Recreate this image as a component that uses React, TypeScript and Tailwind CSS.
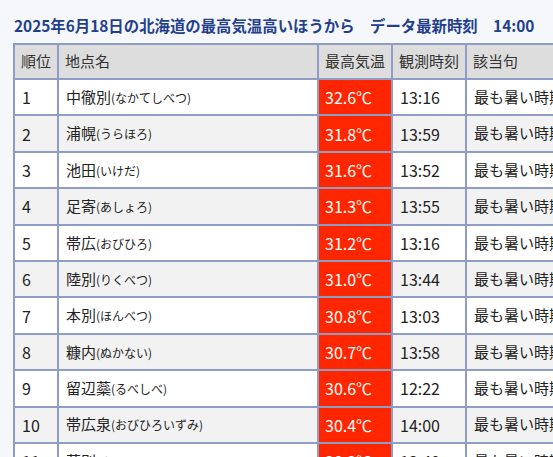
import React from 'react';

type Row = { rank: number; name: string; kana: string; temp: string; time: string };

const rows: Row[] = [
  { rank: 1, name: '中徹別', kana: 'なかてしべつ', temp: '32.6', time: '13:16' },
  { rank: 2, name: '浦幌', kana: 'うらほろ', temp: '31.8', time: '13:59' },
  { rank: 3, name: '池田', kana: 'いけだ', temp: '31.6', time: '13:52' },
  { rank: 4, name: '足寄', kana: 'あしょろ', temp: '31.3', time: '13:55' },
  { rank: 5, name: '帯広', kana: 'おびひろ', temp: '31.2', time: '13:16' },
  { rank: 6, name: '陸別', kana: 'りくべつ', temp: '31.0', time: '13:44' },
  { rank: 7, name: '本別', kana: 'ほんべつ', temp: '30.8', time: '13:03' },
  { rank: 8, name: '糠内', kana: 'ぬかない', temp: '30.7', time: '13:58' },
  { rank: 9, name: '留辺蘂', kana: 'るべしべ', temp: '30.6', time: '12:22' },
  { rank: 10, name: '帯広泉', kana: 'おびひろいずみ', temp: '30.4', time: '14:00' },
  { rank: 11, name: '幕別', kana: 'まくべつ', temp: '30.3', time: '13:40' },
];

const font = { fontFamily: '"Noto Sans CJK JP", "Noto Sans", sans-serif' };

export default function App() {
  return (
    <div className="w-[553px] h-[457px] overflow-hidden bg-[#f6f7fa]" style={font}>
      <div className="pl-[13px] pt-[15px]">
        <h1 className="text-[15.4px] leading-[20px] font-bold text-[#233f8c] whitespace-nowrap mb-[8px] pl-[1px]">
          2025年6月18日の北海道の最高気温高いほうから　データ最新時刻　14:00
        </h1>
        <table className="border-collapse table-fixed w-[700px] text-[#222]">
          <colgroup>
            <col className="w-[44px]" />
            <col className="w-[260px]" />
            <col className="w-[74px]" />
            <col className="w-[74px]" />
            <col className="w-[248px]" />
          </colgroup>
          <thead>
            <tr className="h-[35px] bg-[#dddddd] text-[15px] text-[#333]">
              {['順位', '地点名', '最高気温', '観測時刻', '該当句'].map((h) => (
                <th key={h} className="border-2 border-[#8f9cc6] font-normal text-left px-[6px] whitespace-nowrap">
                  {h}
                </th>
              ))}
            </tr>
          </thead>
          <tbody>
            {rows.map((r) => (
              <tr key={r.rank} className={r.rank % 2 === 0 ? 'h-[36.4px] bg-[#f2f2f2]' : 'h-[36.4px] bg-white'}>
                <td className="border-2 border-[#8f9cc6] px-[7px] text-[16px]">{r.rank}</td>
                <td className="border-2 border-[#8f9cc6] px-[7px] text-[15px] whitespace-nowrap">
                  {r.name}
                  <span className="text-[12px]">({r.kana})</span>
                </td>
                <td className="border-2 border-[#8f9cc6] px-[6px] text-[16px] bg-[#ff2600] text-white">{r.temp}℃</td>
                <td className="border-2 border-[#8f9cc6] px-[7px] text-[16px]">{r.time}</td>
                <td className="border-2 border-[#8f9cc6] px-[7px] text-[15px] whitespace-nowrap">最も暑い時期の気温</td>
              </tr>
            ))}
          </tbody>
        </table>
      </div>
    </div>
  );
}
